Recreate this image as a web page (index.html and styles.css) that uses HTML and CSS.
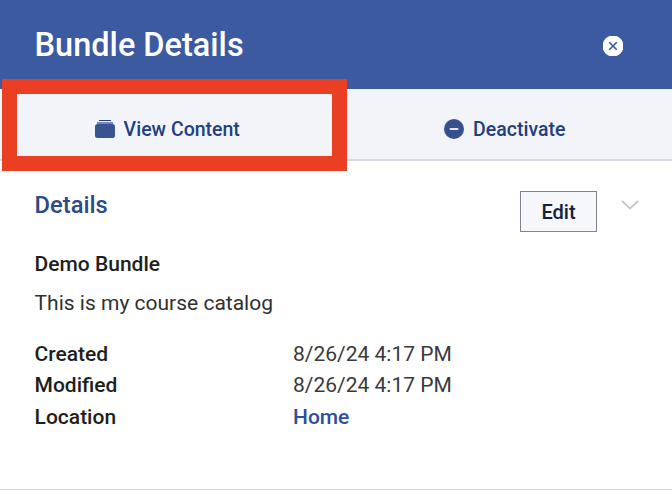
FILE: index.html
```html
<!DOCTYPE html>
<html lang="en">
<head>
<meta charset="utf-8">
<title>Bundle Details</title>
<link rel="stylesheet" href="styles.css">
</head>
<body>
<div class="panel">
  <header class="header">
    <h1 class="title">Bundle Details</h1>
    <button class="close" aria-label="Close">
      <svg width="20" height="20" viewBox="0 0 20 20"><circle cx="10" cy="10" r="10.5" fill="#fff"/><path d="M6.2 6.2l7.6 7.6M13.8 6.2l-7.6 7.6" stroke="#3c5aa0" stroke-width="1.6" fill="none"/></svg>
    </button>
  </header>
  <nav class="tabs">
    <a class="tab">
      <svg class="tab-icon" width="20" height="20" viewBox="0 0 20 20"><path d="M4 1.5h12" stroke="#22407f" stroke-width="1" fill="none"/><path d="M2 3h16v3H2z" fill="#7287b5"/><rect y="5" width="20" height="14" rx="2.5" fill="#3a5490"/></svg>
      <span>View Content</span>
    </a>
    <a class="tab">
      <svg class="tab-icon" width="20" height="20" viewBox="0 0 20 20"><circle cx="10" cy="10" r="10" fill="#35508c"/><rect x="5.5" y="9" width="9" height="2" rx="1" fill="#e6e9f2"/></svg>
      <span>Deactivate</span>
    </a>
  </nav>
  <div class="highlight"></div>
  <main class="content">
    <div class="details-head">
      <h2 class="section">Details</h2>
      <div class="actions">
        <button class="edit">Edit</button>
        <svg class="chevron" width="18" height="10" viewBox="0 0 18 10"><path d="M1 1l8 7.5L17 1" stroke="#c8c8cc" stroke-width="1.8" fill="none"/></svg>
      </div>
    </div>
    <div class="name">Demo Bundle</div>
    <p class="desc">This is my course catalog</p>
    <dl class="meta">
      <dt>Created</dt><dd>8/26/24 4:17 PM</dd>
      <dt>Modified</dt><dd>8/26/24 4:17 PM</dd>
      <dt>Location</dt><dd><a class="link">Home</a></dd>
    </dl>
  </main>
</div>
</body>
</html>
```
FILE: styles.css
```css
* { box-sizing: border-box; }
html, body { margin: 0; padding: 0; background: #fff; }
body { width: 672px; height: 494px; overflow: hidden; font-family: Roboto, "Liberation Sans", sans-serif; }
.panel { position: relative; height: 490px; border-bottom: 1px solid #d6d8e4; }
.header { height: 89px; background: #3c5aa0; display: flex; align-items: center; justify-content: space-between; padding: 0 49px 0 34.6px; }
.title { margin: 0; color: #fff; font-size: 32.5px; font-weight: 500; line-height: 40px; }
.close { width: 20px; height: 20px; padding: 0; border: 0; background: none; display: flex; margin-top: 2px; }
.tabs { height: 72px; display: grid; grid-template-columns: 1fr 1fr; column-gap: 3px; background: #f3f4f9; border-bottom: 2px solid #d6d8e4; }
.tab { display: flex; align-items: center; justify-content: center; gap: 9px; padding-top: 10px; color: #233f7e; font-size: 19.5px; font-weight: 500; }
.tab-icon { flex: none; }
.highlight { position: absolute; left: 2px; top: 79px; width: 345px; height: 92px; border: 15px solid #eb3f24; }
.content { padding: 30px 33px 0 34.6px; }
.details-head { display: flex; justify-content: space-between; align-items: flex-start; }
.section { margin: 0; color: #2b4a8b; font-size: 23.7px; font-weight: 500; line-height: 28px; }
.actions { display: flex; align-items: flex-start; gap: 24px; }
.edit { width: 77px; height: 41px; padding: 0; border: 1px solid #7d8494; background: #f6f7fa; color: #13203f; font: 500 20px Roboto, "Liberation Sans", sans-serif; }
.chevron { margin-top: 9px; }
.name { margin-top: 20px; color: #1e1e1e; font-size: 21px; font-weight: 500; line-height: 24px; }
.desc { margin: 15px 0 0; color: #303030; font-size: 21px; line-height: 24px; }
.meta { margin: 23px 0 0; display: grid; grid-template-columns: 258.4px 1fr; grid-auto-rows: 31.5px; align-items: center; font-size: 21px; line-height: 24px; }
.meta dt { color: #1e1e1e; font-weight: 500; }
.meta dd { margin: 0; color: #3a3a3a; }
.link { color: #2d4d9e; font-weight: 500; }
```
